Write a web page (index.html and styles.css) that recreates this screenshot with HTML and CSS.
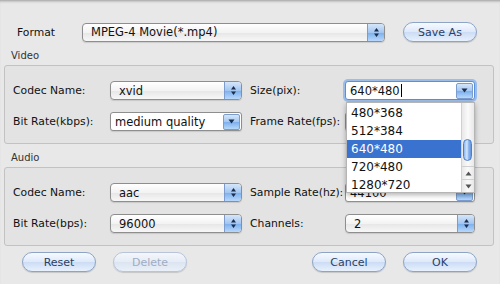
FILE: index.html
```html
<!DOCTYPE html>
<html lang="en">
<head>
    <meta charset="UTF-8">
    <title>Video Settings</title>
    <link rel="stylesheet" href="styles.css">
</head>
<body>
    <div class="sheet">
        <div class="format-row">
            <span class="label format-label">Format</span>
            <div class="popup format-select">
                <span class="value">MPEG-4 Movie(*.mp4)</span>
                <span class="stepper"><svg width="7" height="11" viewBox="0 0 7 11"><path d="M3.5 1 L6 4.5 H1 Z M3.5 10 L6 6.5 H1 Z" fill="#1d2d4d"/></svg></span>
            </div>
            <button class="btn save-btn">Save As</button>
        </div>

        <div class="group-title">Video</div>
        <div class="group">
            <span class="label">Codec Name:</span>
            <div class="popup">
                <span class="value">xvid</span>
                <span class="stepper"><svg width="7" height="11" viewBox="0 0 7 11"><path d="M3.5 1 L6 4.5 H1 Z M3.5 10 L6 6.5 H1 Z" fill="#1d2d4d"/></svg></span>
            </div>
            <span class="label label-right">Size(pix):</span>
            <div class="combo focused size-combo">
                <span class="value">640*480<span class="caret"></span></span>
                <span class="drop"><svg width="7" height="5" viewBox="0 0 7 5"><path d="M0.5 0.5 H6.5 L3.5 4.5 Z" fill="#1d2d4d"/></svg></span>
                <div class="menu">
                    <div class="menu-items">
                        <div class="menu-item">480*368</div>
                        <div class="menu-item">512*384</div>
                        <div class="menu-item selected">640*480</div>
                        <div class="menu-item">720*480</div>
                        <div class="menu-item">1280*720</div>
                    </div>
                    <div class="scrollbar">
                        <div class="track"><div class="thumb"></div></div>
                        <div class="arrow"><svg width="7" height="5" viewBox="0 0 7 5"><path d="M3.5 0.5 L6.5 4.5 H0.5 Z" fill="#555"/></svg></div>
                        <div class="arrow"><svg width="7" height="5" viewBox="0 0 7 5"><path d="M0.5 0.5 H6.5 L3.5 4.5 Z" fill="#555"/></svg></div>
                    </div>
                </div>
            </div>

            <span class="label">Bit Rate(kbps):</span>
            <div class="combo">
                <span class="value">medium quality</span>
                <span class="drop"><svg width="7" height="5" viewBox="0 0 7 5"><path d="M0.5 0.5 H6.5 L3.5 4.5 Z" fill="#1d2d4d"/></svg></span>
            </div>
            <span class="label label-right">Frame Rate(fps):</span>
            <div class="combo">
                <span class="value"></span>
                <span class="drop"><svg width="7" height="5" viewBox="0 0 7 5"><path d="M0.5 0.5 H6.5 L3.5 4.5 Z" fill="#1d2d4d"/></svg></span>
            </div>
        </div>

        <div class="group-title">Audio</div>
        <div class="group">
            <span class="label">Codec Name:</span>
            <div class="popup">
                <span class="value">aac</span>
                <span class="stepper"><svg width="7" height="11" viewBox="0 0 7 11"><path d="M3.5 1 L6 4.5 H1 Z M3.5 10 L6 6.5 H1 Z" fill="#1d2d4d"/></svg></span>
            </div>
            <span class="label label-right">Sample Rate(hz):</span>
            <div class="combo">
                <span class="value">44100</span>
                <span class="drop"><svg width="7" height="5" viewBox="0 0 7 5"><path d="M0.5 0.5 H6.5 L3.5 4.5 Z" fill="#1d2d4d"/></svg></span>
            </div>

            <span class="label">Bit Rate(bps):</span>
            <div class="popup">
                <span class="value">96000</span>
                <span class="stepper"><svg width="7" height="11" viewBox="0 0 7 11"><path d="M3.5 1 L6 4.5 H1 Z M3.5 10 L6 6.5 H1 Z" fill="#1d2d4d"/></svg></span>
            </div>
            <span class="label label-right">Channels:</span>
            <div class="popup">
                <span class="value">2</span>
                <span class="stepper"><svg width="7" height="11" viewBox="0 0 7 11"><path d="M3.5 1 L6 4.5 H1 Z M3.5 10 L6 6.5 H1 Z" fill="#1d2d4d"/></svg></span>
            </div>
        </div>

        <div class="button-row">
            <div class="button-pair">
                <button class="btn">Reset</button>
                <button class="btn" disabled>Delete</button>
            </div>
            <div class="button-pair">
                <button class="btn">Cancel</button>
                <button class="btn">OK</button>
            </div>
        </div>
    </div>
</body>
</html>
```

FILE: styles.css
```css
body {
    margin: 0;
    background-color: #e8e8e8;
    font-family: "DejaVu Sans", Verdana, sans-serif;
    font-size: 10.8px;
    color: #111;
}
.sheet {
    height: 284px;
    box-sizing: border-box;
    padding: 22px 0 0 4px;
    box-shadow: inset 0 3px 3px -2px rgba(0, 0, 0, 0.35);
    overflow: hidden;
}
.label {
    display: flex;
    align-items: center;
    white-space: nowrap;
}
.format-row {
    display: flex;
    align-items: center;
    height: 20px;
}
.format-label {
    padding-left: 13px;
    box-sizing: border-box;
    width: 78px;
}
.format-select {
    width: 303px;
}
.save-btn {
    margin-left: 18px;
}
.group-title {
    font-size: 10px;
    color: #333;
    margin: 8px 0 0 7px;
    height: 13px;
}
.group {
    width: 490px;
    box-sizing: border-box;
    border: 1px solid #c2c2c2;
    border-radius: 3px;
    background-color: #e3e3e3;
    display: grid;
    grid-template-columns: 97px 132px 103px 130px;
    grid-auto-rows: 19px;
    row-gap: 12px;
    padding: 15px 0 12px 8px;
    margin-top: 2px;
    margin-bottom: 6px;
}
.label-right {
    padding-left: 8px;
}
.popup, .combo {
    position: relative;
    height: 19px;
    box-sizing: border-box;
    border: 1px solid #8e8e8e;
    border-radius: 4px;
    display: flex;
    align-items: center;
    justify-content: space-between;
    box-shadow: 0 1px 1px rgba(0, 0, 0, 0.12);
}
.popup {
    background: linear-gradient(#ffffff, #f3f3f3 50%, #e6e6e6 51%, #f7f7f7);
}
.combo {
    background-color: #fff;
    border-radius: 3px;
}
.value {
    padding-left: 8px;
    font-size: 11.5px;
    white-space: nowrap;
}
.combo .value {
    padding-left: 4px;
}
.stepper, .drop {
    width: 16px;
    height: 17px;
    display: flex;
    align-items: center;
    justify-content: center;
    border-left: 1px solid #7b9ccc;
    border-radius: 0 3px 3px 0;
    background: linear-gradient(#d5e6fa, #a3c6f1 50%, #7aaeed 51%, #b8d8fa);
}
.drop {
    width: 15px;
    margin-right: 1px;
    border: 1px solid #7b9ccc;
    height: 14px;
    border-radius: 2px;
}
.focused {
    border-color: #5d8fd6;
    box-shadow: 0 0 0 2px #9bbde9;
}
.caret {
    display: inline-block;
    width: 1px;
    height: 13px;
    background-color: #000;
    vertical-align: -2px;
    margin-left: 1px;
}
.menu {
    position: absolute;
    top: 20px;
    left: 0;
    width: 129px;
    height: 91px;
    background-color: #fff;
    border: 1px solid #b5b5b5;
    box-sizing: border-box;
    box-shadow: 0 2px 5px rgba(0, 0, 0, 0.3);
    display: flex;
    z-index: 5;
}
.menu-items {
    flex: 1;
    padding-top: 1px;
}
.menu-item {
    height: 18px;
    line-height: 18px;
    padding-left: 4px;
    font-size: 12px;
    color: #111;
}
.menu-item.selected {
    background-color: #3a72d0;
    color: #fff;
}
.scrollbar {
    width: 12px;
    display: flex;
    flex-direction: column;
    border-left: 1px solid #d0d0d0;
    background: linear-gradient(90deg, #e8e8e8, #fafafa 50%, #e8e8e8);
}
.track {
    flex: 1;
    position: relative;
}
.thumb {
    position: absolute;
    top: 36px;
    left: 1px;
    width: 9px;
    height: 22px;
    border-radius: 5px;
    border: 1px solid #4f7fc4;
    box-sizing: border-box;
    background: linear-gradient(90deg, #8db6ee, #d9e9fc 45%, #9fc3f3 55%, #5d93e0);
}
.arrow {
    height: 12px;
    display: flex;
    align-items: center;
    justify-content: center;
    border-top: 1px solid #d0d0d0;
}
.button-row {
    display: flex;
    justify-content: space-between;
    width: 455px;
    margin-left: 18px;
}
.button-pair {
    display: flex;
    gap: 17px;
}
.btn {
    width: 74px;
    height: 20px;
    font-family: "DejaVu Sans", Verdana, sans-serif;
    font-size: 11px;
    color: #2b3f66;
    border: 1px solid #8da4c6;
    border-radius: 10px;
    background: linear-gradient(#f6faff, #dde9f9 50%, #cbdcf4 51%, #e8f1fd);
    box-shadow: 0 1px 1px rgba(0, 0, 0, 0.15);
    padding: 0;
}
.btn:disabled {
    color: #9fadc4;
    border-color: #b7c5da;
    background: linear-gradient(#f4f7fb, #e5ecf5 50%, #dbe4f0 51%, #eaf0f8);
}
```
